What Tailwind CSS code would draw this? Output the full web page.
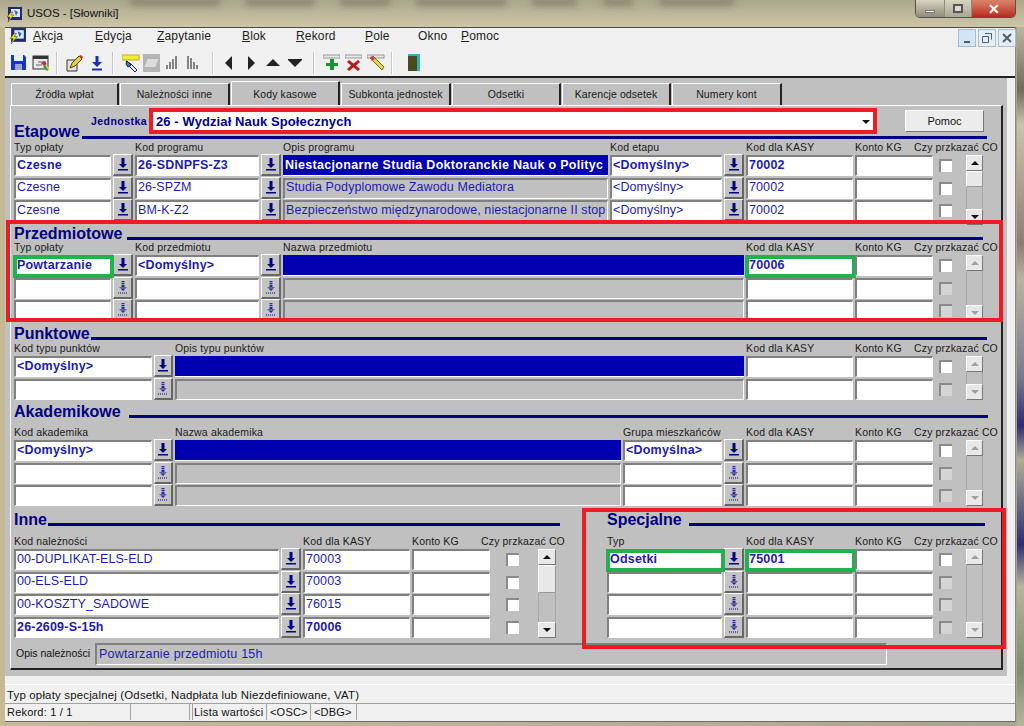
<!DOCTYPE html>
<html lang="pl">
<head>
  <meta charset="UTF-8">
  <title>USOS - [Słowniki]</title>
  <script src="https://cdn.jsdelivr.net/npm/@tailwindcss/browser@4"></script>
</head>
<body class="relative w-[1024px] h-[726px] overflow-hidden bg-gradient-to-r from-[#c6ba95] via-[#b9b296] to-[#a9a68f] font-['Liberation_Sans',Arial,sans-serif]">

  <!-- Title bar -->
  <div class="relative h-[27px] flex items-center pl-[6px] bg-gradient-to-b from-[#aaa68c] to-[#cfc6a8] overflow-hidden">
    <div class="absolute left-[130px] -top-[2px] flex gap-[26px] opacity-60">
      <div class="w-[90px] h-[8px] bg-[#77745f] blur-[3px]"></div>
      <div class="w-[68px] h-[8px] bg-[#77745f] blur-[3px]"></div>
      <div class="w-[50px] h-[8px] bg-[#77745f] blur-[3px]"></div>
      <div class="w-[90px] h-[8px] bg-[#77745f] blur-[3px]"></div>
      <div class="w-[45px] h-[8px] bg-[#77745f] blur-[3px]"></div>
      <div class="w-[30px] h-[8px] bg-[#77745f] blur-[3px]"></div>
      <div class="w-[75px] h-[8px] bg-[#77745f] blur-[3px]"></div>
    </div>
    <svg class="relative w-[17px] h-[17px] mt-[1px]" viewBox="0 0 17 17"><rect x="2" y="1" width="14" height="13" fill="#1c2a6e"/><rect x="5" y="3" width="9" height="8" fill="#dfe9f5"/><path d="M8 4l4 2-2 4z" fill="#2d68c8"/><path d="M5 6L1 11h3l-2 5 6-7H5l2-3z" fill="#f2e022" stroke="#333" stroke-width=".5"/></svg>
    <span class="relative ml-[4px] text-[11.500px] text-[#111]">USOS - [Słowniki]</span>
  </div>
  <div class="absolute left-[915px] top-0 w-[101px] h-[18px] flex rounded-b-[5px] overflow-hidden border border-t-0 border-[#55534a]">
    <div class="w-[28px] bg-gradient-to-b from-[#d8d4c0] to-[#8f8c7c] flex items-center justify-center"><div class="w-[10px] h-[3px] mt-[5px] bg-white border border-[#777]"></div></div>
    <div class="w-[27px] border-l border-[#8d8b7b] bg-gradient-to-b from-[#d8d4c0] to-[#a9a693] flex items-center justify-center"><div class="w-[10px] h-[9px] border-2 border-[#555] bg-[#dcdad0]"></div></div>
    <div class="flex-1 border-l border-[#8d8b7b] bg-gradient-to-b from-[#d9826c] to-[#b8281c] flex items-center justify-center text-white text-[14px] font-bold leading-none">✕</div>
  </div>
  <!-- Blurred desktop behind the right edge -->
  <div class="absolute left-[1017px] top-[27px] w-[7px] h-[699px] bg-[linear-gradient(180deg,#b9b59f_0%,#6f6c5c_9%,#c8c4ac_14%,#a89a8c_24%,#8c7c78_31%,#b8b4a0_36%,#7a7a90_50%,#2c2c70_57%,#b0ac98_62%,#2c2c70_74%,#b8b4a0_80%,#7f8c70_92%,#b8b4a0_100%)]"></div>

  <!-- Client -->
  <div class="relative ml-[5px] w-[1011px] h-[695px] bg-[#f0f0f0] border-t border-[#4a4a44] border-r border-r-[#8a8a80] border-b border-b-[#6b6b60]">

    <!-- Menu -->
    <div class="h-[21px] pb-[5px] pl-[4px] flex items-center text-[12px] tracking-[.15px] text-[#222]">
      <svg class="w-[18px] h-[18px] mr-[6px]" viewBox="0 0 17 17"><rect x="2" y="1" width="14" height="13" fill="#1c2a6e"/><rect x="5" y="3" width="9" height="8" fill="#dfe9f5"/><path d="M8 4l4 2-2 4z" fill="#2d68c8"/><path d="M5 6L1 11h3l-2 5 6-7H5l2-3z" fill="#f2e022" stroke="#333" stroke-width=".5"/></svg>
      <span class="w-[62px]"><u>A</u>kcja</span>
      <span class="w-[62px]"><u>E</u>dycja</span>
      <span class="w-[85px]"><u>Z</u>apytanie</span>
      <span class="w-[54px]"><u>B</u>lok</span>
      <span class="w-[69px]"><u>R</u>ekord</span>
      <span class="w-[53px]"><u>P</u>ole</span>
      <span class="w-[43px]">Okno</span>
      <span><u>P</u>omoc</span>
    </div>
    <!-- MDI child buttons -->
    <div class="absolute left-[953px] top-[1px] flex gap-[1px] text-[#4a6072]">
      <div class="w-[18px] h-[18px] bg-[#d5e4f2] border border-[#a8bccc] flex items-end justify-center pb-[3px]"><div class="w-[6px] h-[2px] bg-[#4a6072]"></div></div>
      <div class="ml-[1px] w-[18px] h-[18px] bg-[#e4ecf4] border border-[#a8bccc] flex items-center justify-center"><svg class="w-[10px] h-[10px]" viewBox="0 0 10 10"><path d="M3 .5h6.500v6M.5 3.500h6v6h-6z" fill="none" stroke="#4a6072"/></svg></div>
      <div class="ml-[1px] w-[18px] h-[18px] bg-[#e4ecf4] border border-[#a8bccc] flex items-center justify-center"><svg class="w-[10px] h-[10px]" viewBox="0 0 10 10"><path d="M1 1l8 8M9 1l-8 8" stroke="#4a6072" stroke-width="2"/></svg></div>
    </div>

    <!-- Toolbar -->
    <div class="h-[29px] pl-[5px] flex items-center border-b-2 border-[#222]">
      <svg class="w-[17px] h-[17px]" viewBox="0 0 17 17"><path d="M1 1h13l2 2v13H1z" fill="#1436c8"/><rect x="4" y="1" width="9" height="6" fill="#e8eef8"/><rect x="5" y="10" width="7" height="6" fill="#9aa6c8"/></svg>
      <svg class="ml-[5px] w-[18px] h-[18px]" viewBox="0 0 18 18"><rect x="1" y="2" width="15" height="13" fill="#e8e8e8" stroke="#333"/><rect x="1" y="2" width="15" height="3" fill="#333"/><path d="M6 8h8M4 11h6" stroke="#666"/><path d="M9 9l3-2 3 3-3 2z" fill="#c8283c"/><path d="M12 12l4 4" stroke="#2c9c30" stroke-width="2.500"/><path d="M15 13l2 2" stroke="#f2e022" stroke-width="2"/></svg>
      <div class="ml-[6px] w-[2px] h-[22px] bg-[#c8c8c8] border-r border-white"></div>
      <svg class="ml-[8px] w-[18px] h-[18px]" viewBox="0 0 18 18"><path d="M1 6h10v11H1z" fill="#e8e6d8" stroke="#333"/><path d="M4 14l2-5 7-7 3 3-7 7z" fill="#e8d030" stroke="#443"/><path d="M13 2l3 3 1-2-2-2z" fill="#d83040"/></svg>
      <svg class="ml-[8px] w-[10px] h-[16px]" viewBox="0 0 10 16"><path d="M3.500 1h3v6H10l-5 5-5-5h3.500z" fill="#1a2fb4"/><rect y="13.500" width="10" height="2" fill="#1a2fb4"/></svg>
      <div class="ml-[10px] w-[2px] h-[22px] bg-[#c8c8c8] border-r border-white"></div>
      <svg class="ml-[8px] w-[18px] h-[18px]" viewBox="0 0 18 18"><rect x="0" y="1" width="17" height="5" fill="#f2ee30" stroke="#b8b020"/><path d="M4 7l5 3 6 6-2 2-6-6z" fill="#e8e8f0" stroke="#222"/><path d="M5 7l4 4-3 2-2-3z" fill="#3c78c8" stroke="#223"/></svg>
      <div class="ml-[3px] w-[17px] h-[18px] bg-[#b4b4b4] flex items-center justify-center"><div class="w-[11px] h-[8px] bg-[#dcdcdc] skew-x-[-20deg]"></div></div>
      <svg class="ml-[6px] w-[11px] h-[15px]" viewBox="0 0 11 15"><path d="M1 14v-4M4 14V7M7 14V4M10 14V1" stroke="#555" stroke-width="1.400"/></svg>
      <svg class="ml-[10px] w-[12px] h-[15px]" viewBox="0 0 12 15"><path d="M1 14V1M4 14V3M7 14V7M10 14v-4" stroke="#555" stroke-width="1.400"/></svg>
      <div class="ml-[13px] w-[2px] h-[22px] bg-[#c8c8c8] border-r border-white"></div>
      <svg class="ml-[11px] w-[7px] h-[14px]" viewBox="0 0 7 14"><path d="M7 0v14L0 7z" fill="#222"/></svg>
      <svg class="ml-[16px] w-[7px] h-[14px]" viewBox="0 0 7 14"><path d="M0 0v14l7-7z" fill="#222"/></svg>
      <svg class="ml-[11px] w-[14px] h-[7px]" viewBox="0 0 14 7"><path d="M0 7h14L7 0z" fill="#222"/></svg>
      <svg class="ml-[8px] w-[14px] h-[8px]" viewBox="0 0 14 8"><path d="M0 0h14v1L7 8 0 1z" fill="#222"/></svg>
      <div class="ml-[11px] w-[2px] h-[22px] bg-[#c8c8c8] border-r border-white"></div>
      <svg class="ml-[8px] w-[17px] h-[17px]" viewBox="0 0 17 17"><rect x="0" y="1" width="17" height="3" fill="#e8e8e8" stroke="#777" stroke-width=".7"/><path d="M7 5h4v4h4v3h-4v4H7v-4H3V9h4z" fill="#18942c"/></svg>
      <svg class="ml-[5px] w-[17px] h-[17px]" viewBox="0 0 17 17"><rect x="0" y="1" width="17" height="3" fill="#e8e8e8" stroke="#777" stroke-width=".7"/><path d="M4 6l4.500 3.500L13 6l2 2-4 3.500 4 3.500-2 2-4.500-3.500L4 17l-2-2 4-3.500L2 8z" fill="#b81c1c"/></svg>
      <svg class="ml-[5px] w-[18px] h-[17px]" viewBox="0 0 18 17"><rect x="0" y="1" width="17" height="3" fill="#e8e8e8" stroke="#777" stroke-width=".7"/><path d="M3 4l3-2 11 11-2 3z" fill="#e8d830" stroke="#333" stroke-width=".7"/><path d="M3 4l3-2 2 3-3 2z" fill="#d83c50"/></svg>
      <div class="ml-[6px] w-[2px] h-[22px] bg-[#c8c8c8] border-r border-white"></div>
      <div class="ml-[15px] w-[12px] h-[17px] bg-[#4a4a20] border-t-2 border-r-[3px] border-[#28b4b4]"></div>
    </div>

    <!-- Form area -->
    <div class="w-[1002px] h-[598px] bg-[#c0c0c0] pl-[5px] text-[#111]">
      <!-- Tabs -->
      <div class="h-[27px] pt-[3px] flex items-end text-[10.500px] tracking-[.1px] text-[#1a1a1a] pl-[1px]">
        <div class="w-[108px] h-[22px] pt-[1px] flex items-center justify-center border-t border-l border-white border-r-2 border-r-[#222] rounded-tl-[2px]">Źródła wpłat</div>
        <div class="ml-[1px] w-[110px] h-[22px] pt-[1px] flex items-center justify-center border-t border-l border-white border-r-2 border-r-[#222]">Należności inne</div>
        <div class="ml-[1px] w-[109px] h-[24px] pt-[3px] flex items-center justify-center border-t border-l border-white border-r-2 border-r-[#222]">Kody kasowe</div>
        <div class="ml-[1px] w-[110px] h-[22px] pt-[1px] flex items-center justify-center border-t border-l border-white border-r-2 border-r-[#222]">Subkonta jednostek</div>
        <div class="ml-[1px] w-[109px] h-[22px] pt-[1px] flex items-center justify-center border-t border-l border-white border-r-2 border-r-[#222]">Odsetki</div>
        <div class="ml-[1px] w-[109px] h-[22px] pt-[1px] flex items-center justify-center border-t border-l border-white border-r-2 border-r-[#222]">Karencje odsetek</div>
        <div class="ml-[1px] w-[110px] h-[22px] pt-[1px] flex items-center justify-center border-t border-l border-white border-r-2 border-r-[#222]">Numery kont</div>
      </div>

      <!-- Panel -->
      <div class="w-[993px] h-[565px] pl-[3px] pt-[2px] border-t border-l border-white border-r-2 border-r-[#222] border-b-2 border-b-[#222]">

        <div class="h-[16px] flex items-start">
          <div class="ml-[77px] w-[58px] mt-[6px] text-[10.500px] font-bold text-[#000080] tracking-[.45px]">Jednostka</div>
          <div class="w-[728px] h-[26px] shrink-0 bg-white border-4 border-[#ed1c24] pl-[3px] pt-[2px] flex items-center justify-between text-[13px] font-bold tracking-[.1px] text-[#000090] relative z-10">
            <span>26 - Wydział Nauk Społecznych</span>
            <svg class="w-[8px] h-[4px] mr-[3px]" viewBox="0 0 8 4"><path d="M0 0h8L4 4z" fill="#111"/></svg>
          </div>
          <div class="ml-[28px] mt-[2px] w-[79px] h-[22px] shrink-0 bg-[#ececec] border border-t-white border-l-white border-r-[#777] border-b-[#777] flex items-center justify-center text-[11px] relative z-10">Pomoc</div>
        </div>

        <!-- Etapowe -->
        <section class="h-[102px]">
          <div class="h-[17px] flex items-start"><h2 class="text-[16px] leading-[16px] font-bold text-[#000080]">Etapowe</h2><div class="ml-[2px] mt-[12px] w-[905px] h-[3px] bg-[#000080]"></div></div>
          <div id="etapowe-l" class="h-[14px] grid grid-cols-[97px_20px_124px_20px_325px_112px_20px_107px_78px_29px_17px] gap-x-[2px]"></div>
          <div id="etapowe" class="grid grid-cols-[97px_20px_124px_20px_325px_112px_20px_107px_78px_29px_17px] gap-x-[2px] auto-rows-[21px] gap-y-[1.700px]"></div>
        </section>

        <!-- Przedmiotowe -->
        <section class="h-[100px]">
          <div class="h-[15px] flex items-start"><h2 class="text-[16px] leading-[16px] font-bold text-[#000080]">Przedmiotowe</h2><div class="ml-[5px] mt-[11px] w-[856px] h-[3px] bg-[#000080]"></div></div>
          <div id="przedm-l" class="h-[14px] grid grid-cols-[97px_20px_124px_20px_461px_107px_78px_29px_17px] gap-x-[2px]"></div>
          <div id="przedm" class="grid grid-cols-[97px_20px_124px_20px_461px_107px_78px_29px_17px] gap-x-[2px] auto-rows-[21px] gap-y-[1.700px]"></div>
        </section>

        <!-- Punktowe -->
        <section class="h-[78px]">
          <div class="h-[16px] flex items-start"><h2 class="text-[16px] leading-[16px] font-bold text-[#000080]">Punktowe</h2><div class="ml-[1px] mt-[11px] w-[896px] h-[3px] bg-[#000080]"></div></div>
          <div id="punkt-l" class="h-[14px] grid grid-cols-[138px_19px_569px_107px_78px_29px_17px] gap-x-[2px]"></div>
          <div id="punkt" class="grid grid-cols-[138px_19px_569px_107px_78px_29px_17px] gap-x-[2px] auto-rows-[21px] gap-y-[2px]"></div>
        </section>

        <!-- Akademikowe -->
        <section class="h-[108px]">
          <div class="h-[22px] flex items-start"><h2 class="text-[16px] leading-[16px] font-bold text-[#000080]">Akademikowe</h2><div class="ml-[8px] mt-[11px] w-[859px] h-[3px] bg-[#000080]"></div></div>
          <div id="akad-l" class="h-[14px] grid grid-cols-[138px_19px_446px_99px_20px_107px_78px_29px_17px] gap-x-[2px]"></div>
          <div id="akad" class="grid grid-cols-[138px_19px_446px_99px_20px_107px_78px_29px_17px] gap-x-[2px] auto-rows-[21px] gap-y-[1.700px]"></div>
        </section>

        <!-- Inne + Specjalne -->
        <div class="flex">
          <section class="w-[593px]">
            <div class="h-[23px] flex items-start"><h2 class="text-[16px] leading-[16px] font-bold text-[#000080]">Inne</h2><div class="ml-[1px] mt-[11px] w-[512px] h-[3px] bg-[#000080]"></div></div>
            <div id="inne-l" class="h-[14px] grid grid-cols-[265px_20px_107px_78px_44px_18px] gap-x-[2px]"></div>
            <div id="inne" class="grid grid-cols-[265px_20px_107px_78px_44px_18px] gap-x-[2px] auto-rows-[21px] gap-y-[1.700px]"></div>
          </section>
          <section>
            <div class="h-[23px] flex items-start"><h2 class="text-[16px] leading-[16px] font-bold text-[#000080]">Specjalne</h2><div class="ml-[7px] mt-[11px] w-[296px] h-[3px] bg-[#000080]"></div></div>
            <div id="spec-l" class="h-[14px] grid grid-cols-[115px_20px_107px_78px_29px_17px] gap-x-[2px]"></div>
            <div id="spec" class="grid grid-cols-[115px_20px_107px_78px_29px_17px] gap-x-[2px] auto-rows-[21px] gap-y-[1.700px]"></div>
          </section>
        </div>

        <!-- Opis należności -->
        <div class="mt-[5px] ml-[2px] flex items-center">
          <span class="w-[79px] text-[10.500px] text-[#111]">Opis należności</span>
          <div class="w-[792px] h-[22px] pl-[2px] flex items-center text-[12.500px] tracking-[.2px] text-[#1c1cb0] border-t-2 border-l-2 border-t-[#808080] border-l-[#808080] border-r border-b border-r-white border-b-white">Powtarzanie przedmiotu 15h</div>
        </div>
      </div>
    </div>

    <!-- Hint and status -->
    <div class="mt-[8px] border-t border-white"></div>
    <div class="pl-[2px] pt-[3px] h-[18px] flex items-center text-[11.400px] tracking-[.2px] text-[#111]">Typ opłaty specjalnej (Odsetki, Nadpłata lub Niezdefiniowane, VAT)</div>
    <div class="h-[17px] pl-[2px] flex border-t border-[#a0a0a0] text-[11px] tracking-[.2px] text-[#111]">
      <div class="w-[122px] flex items-center">Rekord: 1 / 1</div>
      <div class="ml-[1px] w-[60px] border-l border-[#a0a0a0] border-r"></div>
      <div class="ml-[2px] w-[75px] flex items-center pl-[1px] border-l border-[#a0a0a0] border-r">Lista wartości</div>
      <div class="ml-[2px] w-[42px] flex items-center pl-[1px] border-r border-[#a0a0a0]">&lt;OSC&gt;</div>
      <div class="ml-[2px] w-[44px] flex items-center pl-[1px] border-r border-[#a0a0a0]">&lt;DBG&gt;</div>
    </div>
  </div>

  <!-- Red annotation frames -->
  <div class="absolute left-[6px] top-[220px] w-[997px] h-[102px] border-4 border-[#ed1c24]"></div>
  <div class="absolute left-[582px] top-[508px] w-[424px] h-[141px] border-4 border-[#ed1c24]"></div>

  <script>
    const sunk = 'border-t-2 border-l-2 border-t-[#808080] border-l-[#808080] border-r border-b border-r-white border-b-white';

    // white input field
    function f(text, bold, green) {
      const weight = bold ? 'font-bold tracking-[.2px]' : 'tracking-[.1px]';
      const ring = green ? '<div class="absolute -left-[3px] -right-[4px] -top-[2px] -bottom-[3px] border-4 border-[#22b14c]"></div>' : '';
      return `<div class="relative ${sunk} bg-white pl-[1px] pb-[2px] flex items-center whitespace-nowrap text-[12.500px] text-[#1c1cb0] ${weight}">${text || ''}${ring}</div>`;
    }
    // description field, grey when not on the current record
    function d(text) {
      return `<div class="${sunk} bg-[#c0c0c0] pl-[1px] pb-[2px] flex items-center whitespace-nowrap overflow-hidden text-[12.500px] tracking-[.1px] text-[#1c1cb0]">${text || ''}</div>`;
    }
    // selected description field
    function s(text) {
      return `<div class="bg-[#0000b0] border-b border-white pl-[2px] flex items-center whitespace-nowrap overflow-hidden text-[12.500px] font-bold tracking-[.3px] text-white">${text || ''}</div>`;
    }
    // list of values button
    function b(on) {
      const arrow = on
        ? '<svg class="w-[10px] h-[13px]" viewBox="0 0 10 13"><path d="M3.500 0h3v6H9l-4 4-4-4h2.500z" fill="#000080"/><rect x="0" y="11" width="10" height="1.500" fill="#000080"/></svg>'
        : '<svg class="w-[10px] h-[13px]" viewBox="0 0 10 13"><path d="M3.500 0h3v6H9l-4 4-4-4h2.500z" fill="#2a2a9c"/><path d="M3 1.500h4M3 3.500h4M1 7h8" stroke="#c4c4c4" stroke-width=".7"/><path d="M0 12h10" stroke="#000080" stroke-dasharray="1 1"/></svg>';
      return `<div class="h-[22px] -mt-[1px] bg-[#c4c4c4] border border-t-white border-l-white border-r-2 border-b-2 border-r-[#666] border-b-[#666] flex items-center justify-center">${arrow}</div>`;
    }
    // checkbox, indent is a full class string
    function c(on, indent = 'ml-[4px]') {
      const bg = on ? 'bg-white' : 'bg-[#d4d4d4]';
      return `<div><div class="${indent} mt-[4px] w-[13px] h-[13px] ${bg} border-t-2 border-l-2 border-t-[#8a8a8a] border-l-[#8a8a8a]"></div></div>`;
    }
    // scrollbar, span is a full class string
    function sb(span, on, thumb) {
      const col = on ? '#111' : '#a0a0a0';
      const btn = 'shrink-0 h-[16px] bg-[#e8e8e8] border border-t-white border-l-white border-r-[#777] border-b-[#777] flex items-center justify-center';
      const t = thumb ? `<div class="${thumb} bg-[#e8e8e8] border border-t-white border-l-white border-r-[#999] border-b-[#999]"></div>` : '';
      return `<div class="${span} flex flex-col overflow-hidden">
        <div class="${btn}"><svg class="w-[8px] h-[4px]" viewBox="0 0 8 4"><path d="M0 4h8L4 0z" fill="${col}"/></svg></div>
        ${t}<div class="flex-1 border-x border-[#a8a8a8]"></div>
        <div class="${btn}"><svg class="w-[8px] h-[4px]" viewBox="0 0 8 4"><path d="M0 0h8L4 4z" fill="${col}"/></svg></div>
      </div>`;
    }
    // column captions, empty string keeps the track; the long caption starts left of its track
    function labels(id, list, back = '-ml-[21px]') {
      document.getElementById(id).innerHTML = list.map(t =>
        `<div class="text-[10.500px] leading-[12px] whitespace-nowrap text-[#1a1a1a] tracking-[.15px] ${t.startsWith('Czy') ? back : ''}">${t}</div>`).join('');
    }
    const set = (id, html) => { document.getElementById(id).innerHTML = html; };

    labels('etapowe-l', ['Typ opłaty', '', 'Kod programu', '', 'Opis programu', 'Kod etapu', '', 'Kod dla KASY', 'Konto KG', 'Czy przkazać CO']);
    set('etapowe',
      f('Czesne', 1) + b(1) + f('26-SDNPFS-Z3', 1) + b(1) + s('Niestacjonarne Studia Doktoranckie Nauk o Polityc') + f('&lt;Domyślny&gt;', 1) + b(1) + f('70002', 1) + f() + c(1) + sb('row-span-3 -mb-[4px]', 1, 'h-[16px]') +
      f('Czesne') + b(1) + f('26-SPZM') + b(1) + d('Studia Podyplomowe Zawodu Mediatora') + f('&lt;Domyślny&gt;') + b(1) + f('70002') + f() + c(1) +
      f('Czesne') + b(1) + f('BM-K-Z2') + b(1) + d('Bezpieczeństwo międzynarodowe, niestacjonarne II stop') + f('&lt;Domyślny&gt;') + b(1) + f('70002') + f() + c(1));

    labels('przedm-l', ['Typ opłaty', '', 'Kod przedmiotu', '', 'Nazwa przedmiotu', 'Kod dla KASY', 'Konto KG', 'Czy przkazać CO']);
    set('przedm',
      f('Powtarzanie', 1, 1) + b(1) + f('&lt;Domyślny&gt;', 1) + b(1) + s() + f('70006', 1, 1) + f() + c(1) + sb('row-span-3', 0) +
      f() + b(0) + f() + b(0) + d() + f() + f() + c(0) +
      f() + b(0) + f() + b(0) + d() + f() + f() + c(0));

    labels('punkt-l', ['Kod typu punktów', '', 'Opis typu punktów', 'Kod dla KASY', 'Konto KG', 'Czy przkazać CO']);
    set('punkt',
      f('&lt;Domyślny&gt;', 1) + b(1) + s() + f() + f() + c(1) + sb('row-span-2', 0) +
      f() + b(0) + d() + f() + f() + c(0));

    labels('akad-l', ['Kod akademika', '', 'Nazwa akademika', 'Grupa mieszkańców', '', 'Kod dla KASY', 'Konto KG', 'Czy przkazać CO']);
    set('akad',
      f('&lt;Domyślny&gt;', 1) + b(1) + s() + f('&lt;Domyślna&gt;', 1) + b(1) + f() + f() + c(1) + sb('row-span-3', 0) +
      f() + b(0) + d() + f() + b(0) + f() + f() + c(0) +
      f() + b(0) + d() + f() + b(0) + f() + f() + c(0));

    labels('inne-l', ['Kod należności', '', 'Kod dla KASY', 'Konto KG', 'Czy przkazać CO'], '-ml-[11px]');
    set('inne',
      f('00-DUPLIKAT-ELS-ELD') + b(1) + f('70003') + f() + c(1, 'ml-[14px]') + sb('row-span-4', 1, 'h-[28px]') +
      f('00-ELS-ELD') + b(1) + f('70003') + f() + c(1, 'ml-[14px]') +
      f('00-KOSZTY_SADOWE') + b(1) + f('76015') + f() + c(1, 'ml-[14px]') +
      f('26-2609-S-15h', 1) + b(1) + f('70006', 1) + f() + c(1, 'ml-[14px]'));

    labels('spec-l', ['Typ', '', 'Kod dla KASY', 'Konto KG', 'Czy przkazać CO']);
    set('spec',
      f('Odsetki', 1, 1) + b(1) + f('75001', 1, 1) + f() + c(1) + sb('row-span-4', 0) +
      f() + b(0) + f() + f() + c(0) +
      f() + b(0) + f() + f() + c(0) +
      f() + b(0) + f() + f() + c(0));
  </script>
</body>
</html>
